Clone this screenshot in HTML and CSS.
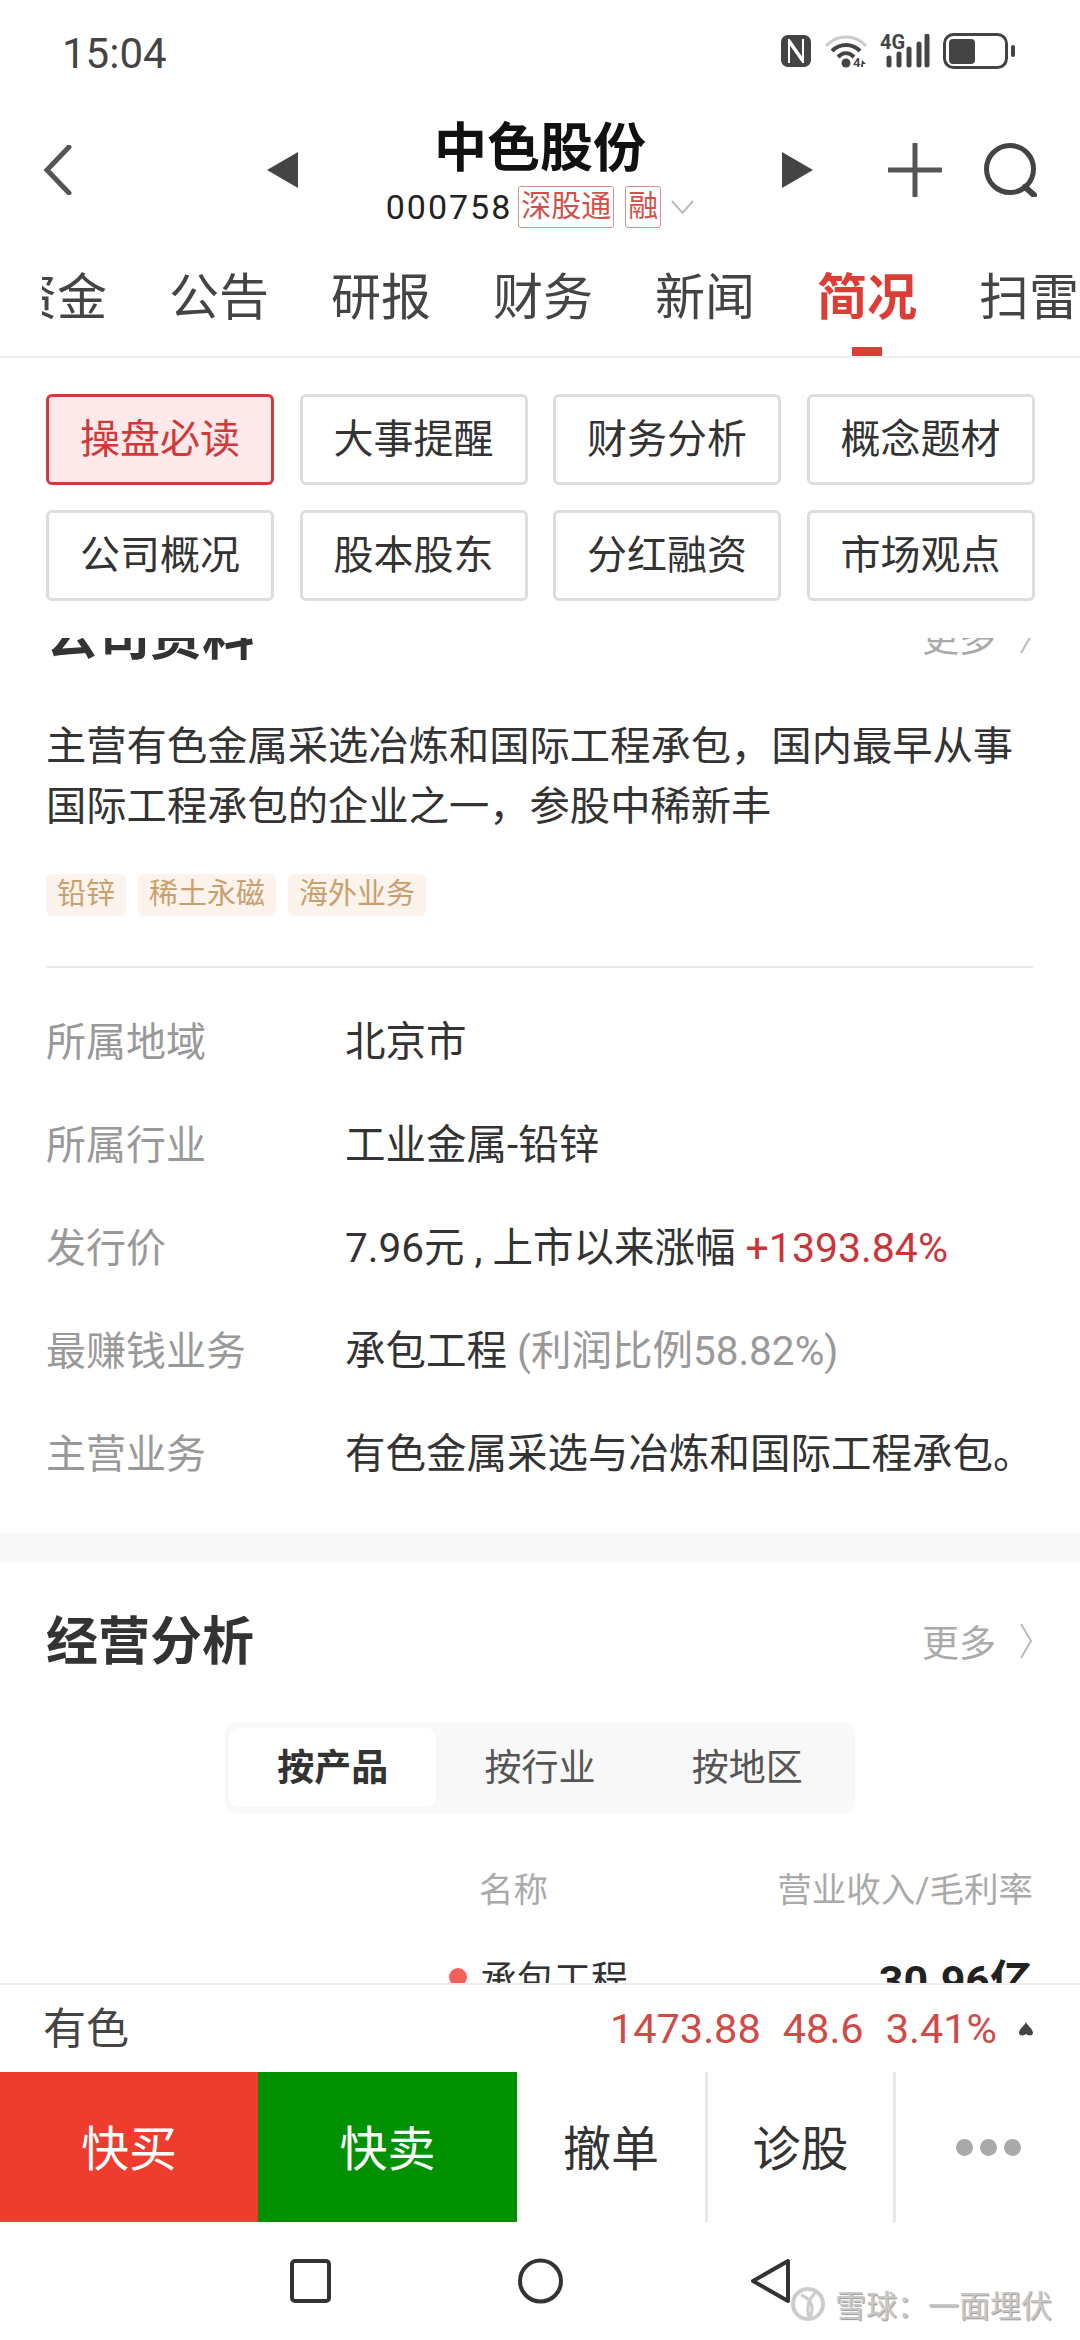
FILE: index.html
```html
<!DOCTYPE html>
<html>
    <head>
        <meta charset="utf-8">
        <title>中色股份</title>
        <link rel="stylesheet" href="styles.css">
    </head>
    <body>
        <div class="app">
            <div class="status">
                <div class="status-time">15:04</div>
                <div class="status-icons">
                    <svg width="30" height="32" viewBox="0 0 30 32"><rect width="30" height="32" rx="7" fill="#444"/><path d="M8 4v24M22 4v24" stroke="#fff" stroke-width="2"/><path d="M8 6l14 20" stroke="#fff" stroke-width="3.500"/></svg>
                    <svg class="icon-wifi" width="44" height="34" viewBox="0 0 44 34"><path d="M2 12C13 0 31 0 42 12" fill="none" stroke="#ccc" stroke-width="3"/><path d="M8 17C16 9 28 9 36 17M14 23C19 18 25 18 30 23" fill="none" stroke="#444" stroke-width="4"/><circle cx="22" cy="29" r="4.500" fill="#444"/><text x="29" y="33" class="icon-small">4</text><path d="M38 26l4 4h-3v3h-2z" fill="#444"/></svg>
                    <svg class="icon-signal" width="50" height="34" viewBox="0 0 50 34"><text x="0" y="15" class="icon-4g">4G</text><path d="M9 24v7M19 20v11M29 15v16M39 10v21M47 2v29" fill="none" stroke="#444" stroke-width="5" stroke-linecap="round"/></svg>
                    <svg class="icon-battery" width="72" height="36" viewBox="0 0 72 36"><rect x="1.500" y="1.500" width="62" height="33" rx="9" fill="none" stroke="#444" stroke-width="3"/><rect x="6" y="6" width="26" height="25" rx="4" fill="#444"/><rect x="68" y="12" width="4" height="12" rx="2" fill="#444"/></svg>
                </div>
            </div>

            <div class="header">
                <svg class="back" width="29" height="50" viewBox="0 0 29 50"><path d="M26 2L4 25l22 23" fill="none" stroke="#555" stroke-width="5" stroke-linecap="round"/></svg>
                <svg class="prev" width="31" height="36" viewBox="0 0 31 36"><path d="M31 0v36L0 18z" fill="#444"/></svg>
                <div class="stock">
                    <div class="stock-name">中色股份</div>
                    <div class="stock-code">
                        <span class="code-num">000758</span>
                        <span class="code-tag">深股通</span>
                        <span class="code-tag">融</span>
                        <svg width="23" height="14" viewBox="0 0 23 14"><path d="M1 1l10.500 12L22 1" fill="none" stroke="#bbb" stroke-width="2"/></svg>
                    </div>
                </div>
                <svg class="next" width="31" height="36" viewBox="0 0 31 36"><path d="M0 0v36l31-18z" fill="#444"/></svg>
                <svg class="plus" width="54" height="54" viewBox="0 0 54 54"><path d="M27 1v52M1 27h52" fill="none" stroke="#555" stroke-width="5" stroke-linecap="round"/></svg>
                <svg class="search" width="56" height="54" viewBox="0 0 56 54"><circle cx="27" cy="26" r="23.500" fill="none" stroke="#444" stroke-width="5"/><path d="M42 44l9 8" stroke="#444" stroke-width="6" stroke-linecap="round"/></svg>
            </div>

            <div class="tabs">
                <div class="tabs-inner">
                    <div class="tab tab-first">资金</div>
                    <div class="tab">公告</div>
                    <div class="tab">研报</div>
                    <div class="tab">财务</div>
                    <div class="tab">新闻</div>
                    <div class="tab tab-on">简况</div>
                    <div class="tab">扫雷</div>
                </div>
            </div>

            <div class="subnav">
                <div class="sub sub-on">操盘必读</div>
                <div class="sub">大事提醒</div>
                <div class="sub">财务分析</div>
                <div class="sub">概念题材</div>
                <div class="sub">公司概况</div>
                <div class="sub">股本股东</div>
                <div class="sub">分红融资</div>
                <div class="sub">市场观点</div>
            </div>

            <div class="scroll">
                <div class="scroll-inner">
                    <div class="section-head">
                        <div class="section-title">公司资料</div>
                        <div class="more">更多<svg width="13" height="36" viewBox="0 0 13 36"><path d="M1 1l10 17L1 35" fill="none" stroke="#bbb" stroke-width="2"/></svg></div>
                    </div>
                    <div class="intro">主营有色金属采选冶炼和国际工程承包，国内最早从事国际工程承包的企业之一，参股中稀新丰</div>
                    <div class="labels">
                        <span class="label">铅锌</span>
                        <span class="label">稀土永磁</span>
                        <span class="label">海外业务</span>
                    </div>
                    <div class="info">
                        <div class="info-row"><div class="info-key">所属地域</div><div>北京市</div></div>
                        <div class="info-row"><div class="info-key">所属行业</div><div>工业金属-铅锌</div></div>
                        <div class="info-row"><div class="info-key">发行价</div><div>7.96元 , 上市以来涨幅 <span class="red">+1393.84%</span></div></div>
                        <div class="info-row"><div class="info-key">最赚钱业务</div><div>承包工程 <span class="gray">(利润比例58.82%)</span></div></div>
                        <div class="info-row"><div class="info-key">主营业务</div><div>有色金属采选与冶炼和国际工程承包。</div></div>
                    </div>
                    <div class="band"></div>
                    <div class="section-head section-two">
                        <div class="section-title">经营分析</div>
                        <div class="more">更多<svg width="13" height="36" viewBox="0 0 13 36"><path d="M1 1l10 17L1 35" fill="none" stroke="#bbb" stroke-width="2"/></svg></div>
                    </div>
                    <div class="segment">
                        <div class="seg seg-on">按产品</div>
                        <div class="seg">按行业</div>
                        <div class="seg">按地区</div>
                    </div>
                    <div class="col-head">
                        <div>名称</div>
                        <div>营业收入/毛利率</div>
                    </div>
                    <div class="col-row">
                        <div class="col-name"><span class="dot"></span>承包工程</div>
                        <div class="col-value">30.96亿</div>
                    </div>
                </div>
            </div>

            <div class="index">
                <div class="index-name">有色</div>
                <div class="index-nums">
                    <span>1473.88</span><span>48.6</span><span>3.41%</span>
                    <svg width="14" height="14" viewBox="0 0 14 14"><path d="M7 0c1 3 7 7 7 11 0 3-5 3-7 1-2 2-7 2-7-1C0 7 6 3 7 0z" fill="#444"/></svg>
                </div>
            </div>

            <div class="actions">
                <div class="act act-buy">快买</div>
                <div class="act act-sell">快卖</div>
                <div class="act act-line">撤单</div>
                <div class="act act-line">诊股</div>
                <div class="act act-more"><i></i><i></i><i></i></div>
            </div>

            <div class="nav">
                <svg width="41" height="44" viewBox="0 0 41 44"><rect x="2" y="2" width="37" height="40" rx="3" fill="none" stroke="#333" stroke-width="4"/></svg>
                <svg width="45" height="46" viewBox="0 0 45 46"><circle cx="22.500" cy="23" r="20.500" fill="none" stroke="#333" stroke-width="4"/></svg>
                <svg width="40" height="46" viewBox="0 0 40 46"><path d="M38 3v40L3 23z" fill="none" stroke="#333" stroke-width="4" stroke-linejoin="round"/></svg>
            </div>

            <div class="mark">
                <svg width="36" height="36" viewBox="0 0 36 36"><circle cx="18" cy="18" r="15" fill="none" stroke="#ccc" stroke-width="4"/><path d="M11 9c10 4 14 12 9 22M25 7c-6 6-9 14-6 24" fill="none" stroke="#ccc" stroke-width="3"/></svg>
                <span>雪球：一面埋伏</span>
            </div>
        </div>
    </body>
</html>
```

FILE: styles.css
```css
*{
    box-sizing: border-box;
}
body{
    margin: 0;
    font-family: Roboto, 'Noto Sans CJK SC', sans-serif;
    color: #333;
    background: #fff;
}
.app{
    position: relative;
    display: flex;
    flex-direction: column;
    width: 1080px;
    height: 2340px;
    overflow: hidden;
}

/* status bar */
.status{
    display: flex;
    align-items: center;
    justify-content: space-between;
    height: 100px;
    padding: 0 65px 0 62px;
    flex-shrink: 0;
}
.status-time{
    font-size: 42px;
    color: #444;
    margin-top: 6px;
}
.status-icons{
    display: flex;
    align-items: center;
    margin-top: 2px;
}
.icon-wifi{
    margin-left: 13px;
}
.icon-signal{
    margin-left: 12px;
}
.icon-battery{
    margin-left: 13px;
}
.icon-small{
    font: 700 13px Roboto, sans-serif;
    fill: #444;
}
.icon-4g{
    font: 700 20px Roboto, sans-serif;
    fill: #444;
}

/* header */
.header{
    display: flex;
    align-items: center;
    height: 140px;
    padding-left: 43px;
    flex-shrink: 0;
}
.prev{
    margin-left: 195px;
}
.plus{
    margin-left: 75px;
}
.search{
    margin-left: 41px;
}
.stock{
    width: 484px;
    text-align: center;
}
.stock-name{
    font-size: 53px;
    font-weight: 700;
    line-height: 66px;
    color: #111;
    margin-top: 3px;
}
.stock-code{
    display: flex;
    align-items: center;
    justify-content: center;
    margin-top: 4px;
}
.code-num{
    font-size: 34px;
    letter-spacing: 2px;
    color: #222;
    margin-right: 6px;
}
.code-tag{
    height: 42px;
    line-height: 38px;
    padding: 0 2px;
    margin-right: 11px;
    font-size: 30px;
    color: #d2504a;
    border: 1px solid #d98f8c;
    border-radius: 3px;
}
.stock-code svg{
    margin-left: -1px;
}

/* tabs */
.tabs{
    height: 118px;
    flex-shrink: 0;
    border-bottom: 2px solid #eee;
}
.tabs-inner{
    display: flex;
    gap: 62px;
    margin-left: 42px;
    height: 116px;
    overflow: hidden;
}
.tab{
    position: relative;
    flex-shrink: 0;
    width: 100px;
    height: 116px;
    font-size: 50px;
    line-height: 116px;
    color: #444;
}
.tab-first{
    margin-left: -35px;
}
.tab-on{
    color: #dc3e36;
    font-weight: 700;
}
.tab-on::after{
    content: "";
    position: absolute;
    left: 35px;
    bottom: 0;
    width: 30px;
    height: 9px;
    background: #dc3e36;
}

/* sub menu */
.subnav{
    display: grid;
    grid-template-columns: repeat(4, 228px);
    grid-auto-rows: 91px;
    gap: 25px 25.500px;
    padding: 36px 47px 37px 46px;
    height: 280px;
    flex-shrink: 0;
}
.sub{
    display: flex;
    align-items: center;
    justify-content: center;
    padding-bottom: 8px;
    font-size: 40px;
    color: #333;
    border: 3px solid #ddd;
    border-radius: 6px;
}
.sub-on{
    color: #d0393a;
    background: #fde8ea;
    border-color: #cc3d3d;
}

/* scrolled content */
.scroll{
    flex: 1;
    overflow: hidden;
}
.scroll-inner{
    margin-top: -42px;
}
.section-head{
    display: flex;
    align-items: center;
    justify-content: space-between;
    height: 80px;
    padding: 0 47px 0 46px;
}
.section-two{
    margin-top: 39px;
}
.section-title{
    padding-bottom: 8px;
    font-size: 52px;
    font-weight: 700;
    color: #333;
}
.more{
    display: flex;
    align-items: center;
    gap: 24px;
    font-size: 37px;
    color: #aaa;
}
.intro{
    margin: 41px 47px 0 46px;
    font-size: 40.300px;
    line-height: 60px;
    color: #333;
}
.labels{
    display: flex;
    gap: 12px;
    margin: 37px 47px 0 46px;
    padding-bottom: 50px;
    border-bottom: 2px solid #e8e8e8;
}
.label{
    height: 42px;
    line-height: 40px;
    padding: 0 11px;
    font-size: 29px;
    color: #c9a06c;
    background: #fbf3ec;
    border-radius: 6px;
}
.info{
    padding: 22px 0 0 46px;
}
.info-row{
    display: flex;
    align-items: center;
    height: 103px;
    padding-bottom: 6px;
    font-size: 40.500px;
    color: #333;
    white-space: nowrap;
}
.info-key{
    width: 299px;
    flex-shrink: 0;
    font-size: 40px;
    color: #999;
}
.red{
    font-size: 41px;
    color: #c9363a;
}
.gray{
    color: #999;
}
.band{
    height: 29px;
    margin-top: 28px;
    background: #f8f8f8;
}
.segment{
    display: flex;
    width: 630px;
    height: 91px;
    margin: 41px 0 0 225px;
    padding: 6px 4px;
    background: #f8f8f8;
    border-radius: 12px;
}
.seg{
    flex: 1;
    display: flex;
    align-items: center;
    justify-content: center;
    padding-bottom: 6px;
    font-size: 37px;
    color: #555;
}
.seg-on{
    font-weight: 700;
    color: #333;
    background: #fff;
    border-radius: 10px;
}
.col-head{
    display: flex;
    justify-content: space-between;
    align-items: center;
    height: 50px;
    margin-top: 50px;
    padding: 0 47px 2px 479px;
    font-size: 34.500px;
    color: #aaa;
}
.col-row{
    display: flex;
    justify-content: space-between;
    align-items: center;
    height: 60px;
    margin-top: 34px;
    padding: 0 47px 0 449px;
}
.col-name{
    display: flex;
    align-items: center;
    font-size: 37px;
    color: #333;
}
.dot{
    width: 18px;
    height: 18px;
    margin-right: 13px;
    background: #f4605a;
    border-radius: 50%;
}
.col-value{
    font-size: 43px;
    font-weight: 700;
    color: #222;
}

/* bottom */
.index{
    display: flex;
    align-items: center;
    justify-content: space-between;
    height: 89px;
    padding: 0 47px 0 43px;
    border-top: 2px solid #eee;
    background: #fff;
    flex-shrink: 0;
}
.index-name{
    padding-bottom: 8px;
    font-size: 43px;
    color: #444;
}
.index-nums{
    display: flex;
    align-items: center;
    gap: 22px;
    font-size: 41.500px;
    color: #cf4b47;
}
.actions{
    display: grid;
    grid-template-columns: 258px 259px 191px 188px 184px;
    height: 150px;
    flex-shrink: 0;
}
.act{
    display: flex;
    align-items: center;
    justify-content: center;
    padding-bottom: 5px;
    font-size: 48px;
    color: #333;
}
.act-buy{
    color: #fff;
    background: #ee3d2f;
}
.act-sell{
    color: #fff;
    background: #009100;
}
.act-line{
    border-right: 3px solid #e8e8ee;
}
.act-more{
    gap: 7px;
    padding-bottom: 0;
}
.act-more i{
    width: 17px;
    height: 17px;
    background: #aaa;
    border-radius: 50%;
}
.nav{
    display: flex;
    align-items: center;
    justify-content: center;
    gap: 187px;
    height: 118px;
    flex-shrink: 0;
}

/* watermark over the nav bar */
.mark{
    position: absolute;
    left: 790px;
    top: 2281px;
    display: flex;
    align-items: center;
    gap: 9px;
    font-size: 31px;
    color: #c8c8c8;
    text-shadow: 1px 1px 1px #999;
}
```
